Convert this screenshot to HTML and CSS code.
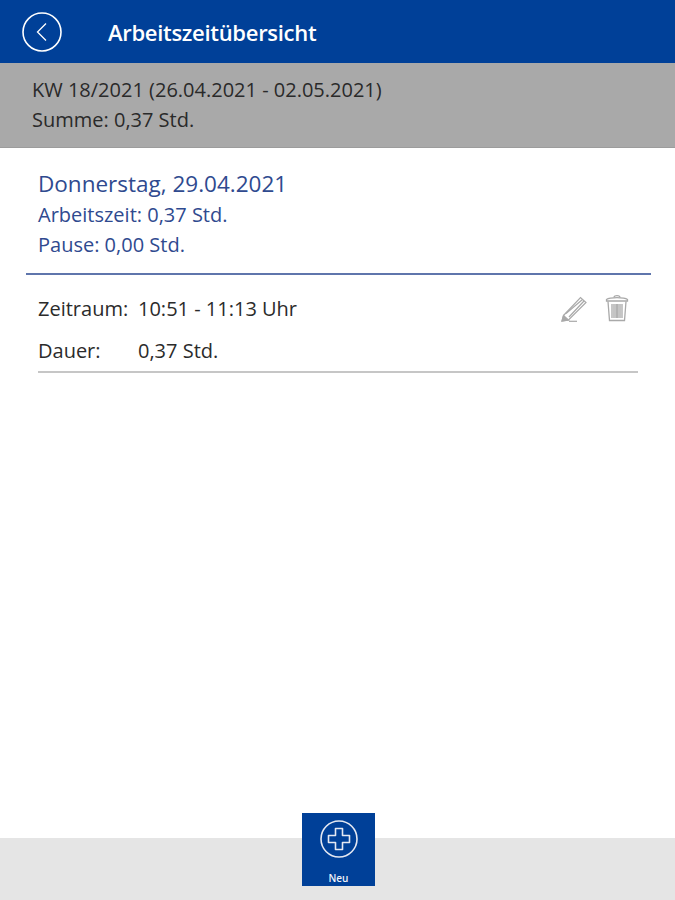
FILE: index.html
```html
<!DOCTYPE html>
<html lang="de">
<head>
<meta charset="utf-8">
<title>Arbeitszeitübersicht</title>
<link rel="stylesheet" href="styles.css">
</head>
<body>
<div class="app">
  <header class="topbar">
    <svg class="back" width="40" height="40" viewBox="0 0 40 40" fill="none" stroke="#fff">
      <circle cx="20" cy="20" r="19" stroke-width="1.6"/>
      <path d="M24 11.5 L15.5 20 L24 28.5" stroke-width="1.3"/>
    </svg>
    <h1 class="title">Arbeitszeitübersicht</h1>
  </header>
  <section class="summary">
    <div>KW 18/2021 (26.04.2021 - 02.05.2021)</div>
    <div>Summe: 0,37 Std.</div>
  </section>
  <main class="content">
    <div class="day">
      <div class="day-title">Donnerstag, 29.04.2021</div>
      <div class="day-line">Arbeitszeit: 0,37 Std.</div>
      <div class="day-line">Pause: 0,00 Std.</div>
    </div>
    <div class="entry">
      <div class="entry-row">
        <span class="label">Zeitraum:</span><span>10:51 - 11:13 Uhr</span>
        <div class="actions">
          <svg width="28" height="28" viewBox="0 0 28 28" fill="none" stroke="#a9a9a9" stroke-width="1.2">
            <path d="M3.5 21.5 L20.5 3.5 L26 8.5 L8.5 26 L2 27 Z"/>
            <path d="M6 19.5 L22.5 5.5 M9 23 L24 7"/>
            <path d="M3.5 21.5 L8.5 26 L2 27 Z" fill="#a9a9a9"/>
            <path d="M9 27.3 H17"/>
          </svg>
          <svg width="24" height="30" viewBox="0 0 24 28" fill="none" stroke="#a9a9a9" stroke-width="1.3">
            <path d="M1.5 5.5 C5 3 19 3 22.5 5.5 L22.5 7 H1.5 Z"/>
            <path d="M9 3.5 C9 1 15 1 15 3.5"/>
            <path d="M3 7.5 L4.5 26.5 H19.5 L21 7.5"/>
            <path d="M8 10 H16 V24 H8 Z" fill="#c4c4c4" stroke="none"/>
            <path d="M7 10 V24 M12 10 V24 M17 10 V24"/>
          </svg>
        </div>
      </div>
      <div class="entry-row entry-row-second">
        <span class="label">Dauer:</span><span>0,37 Std.</span>
      </div>
    </div>
  </main>
  <footer class="bottom">
    <button class="new" type="button">
      <svg width="38" height="38" viewBox="0 0 38 38" fill="none" stroke="#e4e8f2">
        <circle cx="19" cy="19" r="18" stroke-width="1.6"/>
        <path d="M15.5 8.5 H22.5 V15.5 H29.5 V22.5 H22.5 V29.5 H15.5 V22.5 H8.5 V15.5 H15.5 Z" stroke-width="1.6" stroke-linejoin="round"/>
      </svg>
      <span class="new-label">Neu</span>
    </button>
  </footer>
</div>
</body>
</html>
```

FILE: styles.css
```css
* { box-sizing: border-box; }
html, body { margin: 0; padding: 0; }
body {
  font-family: "Open Sans", "Noto Sans", sans-serif;
  background: #fff;
}
.app {
  width: 675px;
  height: 900px;
  display: flex;
  flex-direction: column;
  overflow: hidden;
}
.topbar {
  height: 63px;
  flex: none;
  background: #004098;
  display: flex;
  align-items: center;
  padding-left: 22px;
  gap: 46px;
}
.back { margin-top: 1px; }
.title {
  margin: 0;
  color: #fff;
  font-size: 22px;
  font-weight: 600;
  letter-spacing: -0.3px;
}
.summary {
  height: 85px;
  flex: none;
  background: #a9a9a9;
  border-bottom: 1px solid #9c9c9c;
  padding: 12px 0 0 32px;
  color: #2a2a2a;
  font-size: 20px;
  line-height: 30px;
}
.content { flex: 1; }
.day {
  margin: 0 0 0 26px;
  width: 625px;
  height: 127px;
  padding: 20px 0 0 12px;
  border-bottom: 2px solid #5f75ac;
  color: #2f4a8f;
}
.day-title { font-size: 22.5px; line-height: 32px; }
.day-line { font-size: 20px; line-height: 30px; }
.entry {
  margin: 0 0 0 38px;
  width: 600px;
  height: 98px;
  padding-top: 19px;
  border-bottom: 2px solid #c6c6c6;
  color: #2b2b2b;
  font-size: 20px;
}
.entry-row {
  display: flex;
  align-items: center;
  height: 28px;
}
.entry-row-second { margin-top: 14px; }
.label { width: 100px; }
.actions {
  margin-left: auto;
  display: flex;
  gap: 17px;
  align-items: center;
  padding-right: 9px;
}
.bottom {
  height: 62px;
  flex: none;
  background: #e5e5e5;
  display: flex;
  justify-content: center;
  position: relative;
}
.new {
  position: absolute;
  left: 302px;
  top: -25px;
  width: 73px;
  height: 73px;
  border: 0;
  padding: 7px 0 0;
  background: #004098;
  display: flex;
  flex-direction: column;
  align-items: center;
  font-family: inherit;
}
.new-label {
  color: #eef1f7;
  font-size: 10px;
  font-weight: 600;
  margin-top: 13px;
  line-height: 14px;
}
```
